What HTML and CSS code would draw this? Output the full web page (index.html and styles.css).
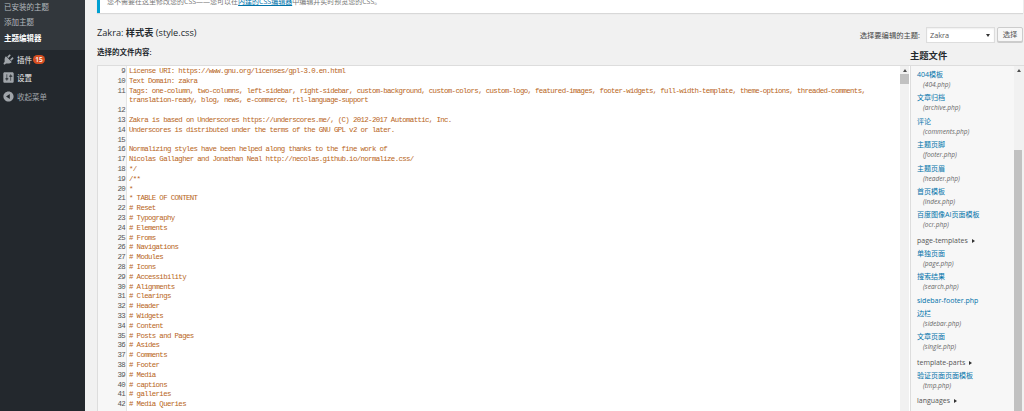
FILE: index.html
```html
<!DOCTYPE html>
<html lang="zh-CN">
<head>
<meta charset="utf-8">
<title>编辑主题</title>
<link rel="stylesheet" href="styles.css">
</head>
<body>
<div class="page">
<nav class="side">
  <ul class="sub">
    <li>已安装的主题</li>
    <li>添加主题</li>
    <li class="cur">主题编辑器</li>
  </ul>
  <ul class="menu">
    <li class="plug"><svg class="ic" viewBox="0 0 20 20"><path d="M13.11 4.36L9.87 7.6 8 5.73l3.24-3.24c.35-.34 1.05-.2 1.56.32.52.51.66 1.21.31 1.55zm-8 1.77l.91-1.12 9.01 9.01-1.19.84c-.71.71-2.63 1.16-3.82 1.16H6.14L4.9 17.26c-.59.59-1.54.59-2.12 0-.59-.58-.59-1.53 0-2.12l1.24-1.24v-3.88c0-1.13.4-3.19 1.09-3.89zm7.26 3.97l3.24-3.24c.34-.35 1.04-.21 1.55.31.52.51.66 1.21.31 1.55l-3.24 3.25z"/></svg>插件<span class="badge">15</span></li>
    <li class="set"><svg class="ic" viewBox="0 0 20 20"><path fill-rule="evenodd" d="M18 16V4c0-1.1-.9-2-2-2H4c-1.1 0-2 .9-2 2v12c0 1.1.9 2 2 2h12c1.1 0 2-.9 2-2zM8 11h1c.55 0 1 .45 1 1s-.45 1-1 1H8v1.5c0 .28-.22.5-.5.5s-.5-.22-.5-.5V13H6c-.55 0-1-.45-1-1s.45-1 1-1h1V5.5c0-.28.22-.5.5-.5s.5.22.5.5V11zm5-2h-1c-.55 0-1-.45-1-1s.45-1 1-1h1V5.5c0-.28.22-.5.5-.5s.5.22.5.5V7h1c.55 0 1 .45 1 1s-.45 1-1 1h-1v5.5c0 .28-.22.5-.5.5s-.5-.22-.5-.5V9z"/></svg>设置</li>
    <li class="col"><svg class="ic" viewBox="0 0 20 20"><path fill-rule="evenodd" d="M10 2.16c4.33 0 7.84 3.51 7.84 7.84s-3.51 7.84-7.84 7.84S2.16 14.33 2.16 10 5.71 2.16 10 2.16zm2 11.72V6.12L6.18 9.97z"/></svg>收起菜单</li>
  </ul>
</nav>
<main class="main">
  <div class="notice">您不需要在这里修改您的CSS——您可以在<a href="#">内建的CSS编辑器</a>中编辑并实时预览您的CSS。</div>
  <div class="head">
    <h1 class="title">Zakra: <b>样式表</b> (style.css)</h1>
    <div class="pick">
      <label>选择要编辑的主题:</label>
      <span class="select">Zakra<i></i></span>
      <span class="btn">选择</span>
    </div>
  </div>
  <div class="cols">
    <div class="left">
      <div class="lbl">选择的文件内容:</div>
      <div class="editor">
        <div class="code">
<div class="ln"><span>9</span><code>License URI: https://www.gnu.org/licenses/gpl-3.0.en.html</code></div>
<div class="ln"><span>10</span><code>Text Domain: zakra</code></div>
<div class="ln"><span>11</span><code>Tags: one-column, two-columns, left-sidebar, right-sidebar, custom-background, custom-colors, custom-logo, featured-images, footer-widgets, full-width-template, theme-options, threaded-comments,<br>translation-ready, blog, news, e-commerce, rtl-language-support</code></div>
<div class="ln"><span>12</span><code></code></div>
<div class="ln"><span>13</span><code>Zakra is based on Underscores https://underscores.me/, (C) 2012-2017 Automattic, Inc.</code></div>
<div class="ln"><span>14</span><code>Underscores is distributed under the terms of the GNU GPL v2 or later.</code></div>
<div class="ln"><span>15</span><code></code></div>
<div class="ln"><span>16</span><code>Normalizing styles have been helped along thanks to the fine work of</code></div>
<div class="ln"><span>17</span><code>Nicolas Gallagher and Jonathan Neal http://necolas.github.io/normalize.css/</code></div>
<div class="ln"><span>18</span><code>*/</code></div>
<div class="ln"><span>19</span><code>/**</code></div>
<div class="ln"><span>20</span><code>*</code></div>
<div class="ln"><span>21</span><code>* TABLE OF CONTENT</code></div>
<div class="ln"><span>22</span><code># Reset</code></div>
<div class="ln"><span>23</span><code># Typography</code></div>
<div class="ln"><span>24</span><code># Elements</code></div>
<div class="ln"><span>25</span><code># Froms</code></div>
<div class="ln"><span>26</span><code># Navigations</code></div>
<div class="ln"><span>27</span><code># Modules</code></div>
<div class="ln"><span>28</span><code># Icons</code></div>
<div class="ln"><span>29</span><code># Accessibility</code></div>
<div class="ln"><span>30</span><code># Alignments</code></div>
<div class="ln"><span>31</span><code># Clearings</code></div>
<div class="ln"><span>32</span><code># Header</code></div>
<div class="ln"><span>33</span><code># Widgets</code></div>
<div class="ln"><span>34</span><code># Content</code></div>
<div class="ln"><span>35</span><code># Posts and Pages</code></div>
<div class="ln"><span>36</span><code># Asides</code></div>
<div class="ln"><span>37</span><code># Comments</code></div>
<div class="ln"><span>38</span><code># Footer</code></div>
<div class="ln"><span>39</span><code># Media</code></div>
<div class="ln"><span>40</span><code># captions</code></div>
<div class="ln"><span>41</span><code># galleries</code></div>
<div class="ln"><span>42</span><code># Media Queries</code></div>
        </div>
        <div class="bar"><i class="up"></i><i class="thumb"></i></div>
      </div>
    </div>
    <aside class="files">
      <h2>主题文件</h2>
      <div class="list">
        <ul>
          <li><a href="#">404模板</a><em>(404.php)</em></li>
          <li><a href="#">文章归档</a><em>(archive.php)</em></li>
          <li><a href="#">评论</a><em>(comments.php)</em></li>
          <li><a href="#">主题页脚</a><em>(footer.php)</em></li>
          <li><a href="#">主题页眉</a><em>(header.php)</em></li>
          <li><a href="#">首页模板</a><em>(index.php)</em></li>
          <li><a href="#">百度图像AI页面模板</a><em>(ocr.php)</em></li>
          <li class="dir">page-templates<i></i></li>
          <li><a href="#">单独页面</a><em>(page.php)</em></li>
          <li><a href="#">搜索结果</a><em>(search.php)</em></li>
          <li class="solo"><a href="#">sidebar-footer.php</a></li>
          <li><a href="#">边栏</a><em>(sidebar.php)</em></li>
          <li><a href="#">文章页面</a><em>(single.php)</em></li>
          <li class="dir">template-parts<i></i></li>
          <li><a href="#">验证页面页面模板</a><em>(tmp.php)</em></li>
          <li class="dir">languages<i></i></li>
        </ul>
        <div class="bar2"><i class="up"></i><i class="thumb2"></i></div>
      </div>
    </aside>
  </div>
</main>
</div>
</body>
</html>
```

FILE: styles.css
```css
* { box-sizing: border-box; }
html, body { margin: 0; height: 411px; overflow: hidden; }
body { font-family: "Open Sans", "Noto Sans CJK SC", sans-serif; background: #f1f1f1; color: #444; }
ul { list-style: none; margin: 0; padding: 0; }
a { color: #0073aa; text-decoration: none; }
.page { display: flex; height: 411px; }

.side { width: 85px; flex: none; background: #23282d; font-size: 7.5px; }
.sub { background: #32373c; height: 50px; color: #b4b9be; }
.sub li { height: 15.5px; line-height: 15.5px; padding-left: 4px; position: relative; top: -.5px; }
.sub .cur { color: #fff; font-weight: 700; }
.menu { color: #eee; }
.menu li { display: flex; align-items: center; height: 18.5px; padding-left: 2px; }
.col { color: #a0a5aa; }
.ic { width: 13px; height: 13px; margin-right: 2px; fill: #a0a5aa; flex: none; }
.badge { margin-left: 1px; width: 12px; height: 9px; border-radius: 5px; background: #d54e21; color: #fff; font-size: 6.5px; line-height: 9px; text-align: center; font-weight: 600; }

.main { flex: 1; min-width: 0; padding-left: 12px; }
.notice { margin-top: -10px; margin-right: 1px; height: 23px; padding: 7px 0 0 7px; background: #fff; border-left: 3px solid #00a0d2; font-size: 7px; line-height: 10px; color: #777; box-shadow: 0 1px 1px rgba(0,0,0,.1); }
.notice a { text-decoration: underline; }

.head { display: flex; justify-content: space-between; align-items: center; height: 24px; margin-top: 8px; padding-right: 1px; }
.title { margin: 0; font-size: 9.2px; font-weight: 400; color: #23282d; line-height: 14px; }
.title b { font-weight: 600; }
.pick { display: flex; align-items: center; font-size: 7.3px; color: #444; padding-top: 3px; }
.pick label { margin-right: 6px; }
.select { width: 69px; height: 16px; background: #fff; border: 1px solid #ddd; padding-left: 3px; line-height: 14px; position: relative; color: #555; box-shadow: inset 0 1px 2px rgba(0,0,0,.07); }
.select i { position: absolute; right: 4px; top: 6px; border: 2px solid transparent; border-top: 3px solid #333; border-bottom: 0; }
.btn { margin-left: 2px; width: 26px; height: 15px; background: #f7f7f7; border: 1px solid #ccc; border-radius: 2px; text-align: center; line-height: 13px; color: #555; box-shadow: 0 1px 0 #ccc; }

.cols { display: flex; }
.left { width: 813px; flex: none; }
.lbl { font-size: 7.5px; font-weight: 600; height: 20px; line-height: 12px; padding-top: 1px; color: #23282d; }
.editor { display: flex; height: 360px; border: 1px solid #ddd; border-right: 0; background: #fff; }
.code { flex: 1; min-width: 0; padding-top: 1px; font-family: "Liberation Mono", monospace; font-size: 7.4px; line-height: 9.8px; letter-spacing: -.64px; background: linear-gradient(to right, #f7f7f7 0, #f7f7f7 28px, #e5e5e5 28px, #e5e5e5 29px, #fff 29px); }
.ln { display: flex; }
.ln span { width: 27px; flex: none; text-align: right; color: #555; }
.ln code { font: inherit; margin-left: 4px; color: #b8651a; white-space: pre; }
.bar { width: 9px; flex: none; background: #f1f1f1; margin-right: 1px; }
.up { display: block; width: 0; margin: 3px auto 0; border: 2px solid transparent; border-bottom: 3px solid #505050; border-top: 0; }
.thumb { display: block; height: 10px; background: #c1c1c1; margin-top: 2px; }

.files { flex: 1; min-width: 0; }
.files h2 { margin: 0; padding-top: 4px; font-size: 9.3px; font-weight: 700; color: #23282d; line-height: 14px; height: 20px; }
.list { display: flex; height: 360px; background: #f7f7f7; border-top: 1px solid #ddd; border-left: 1px solid #ddd; }
.list ul { flex: 1; min-width: 0; padding: 3px 0 0 6px; font-size: 7px; }
.list li { line-height: 11px; }
.list em { display: block; font-size: 6.5px; line-height: 10.4px; padding-left: 6px; margin-bottom: 2px; color: #666; }
.list .solo { margin-bottom: 2.4px; }
.list .dir { height: 15px; line-height: 15px; color: #555; }
.dir i { display: inline-block; margin-left: 4px; border: 2.5px solid transparent; border-left: 3px solid #333; border-right: 0; }
.bar2 { width: 10px; flex: none; background: #f1f1f1; }
.thumb2 { display: block; width: 8px; height: 300px; margin-top: 78px; background: #c1c1c1; }
```
